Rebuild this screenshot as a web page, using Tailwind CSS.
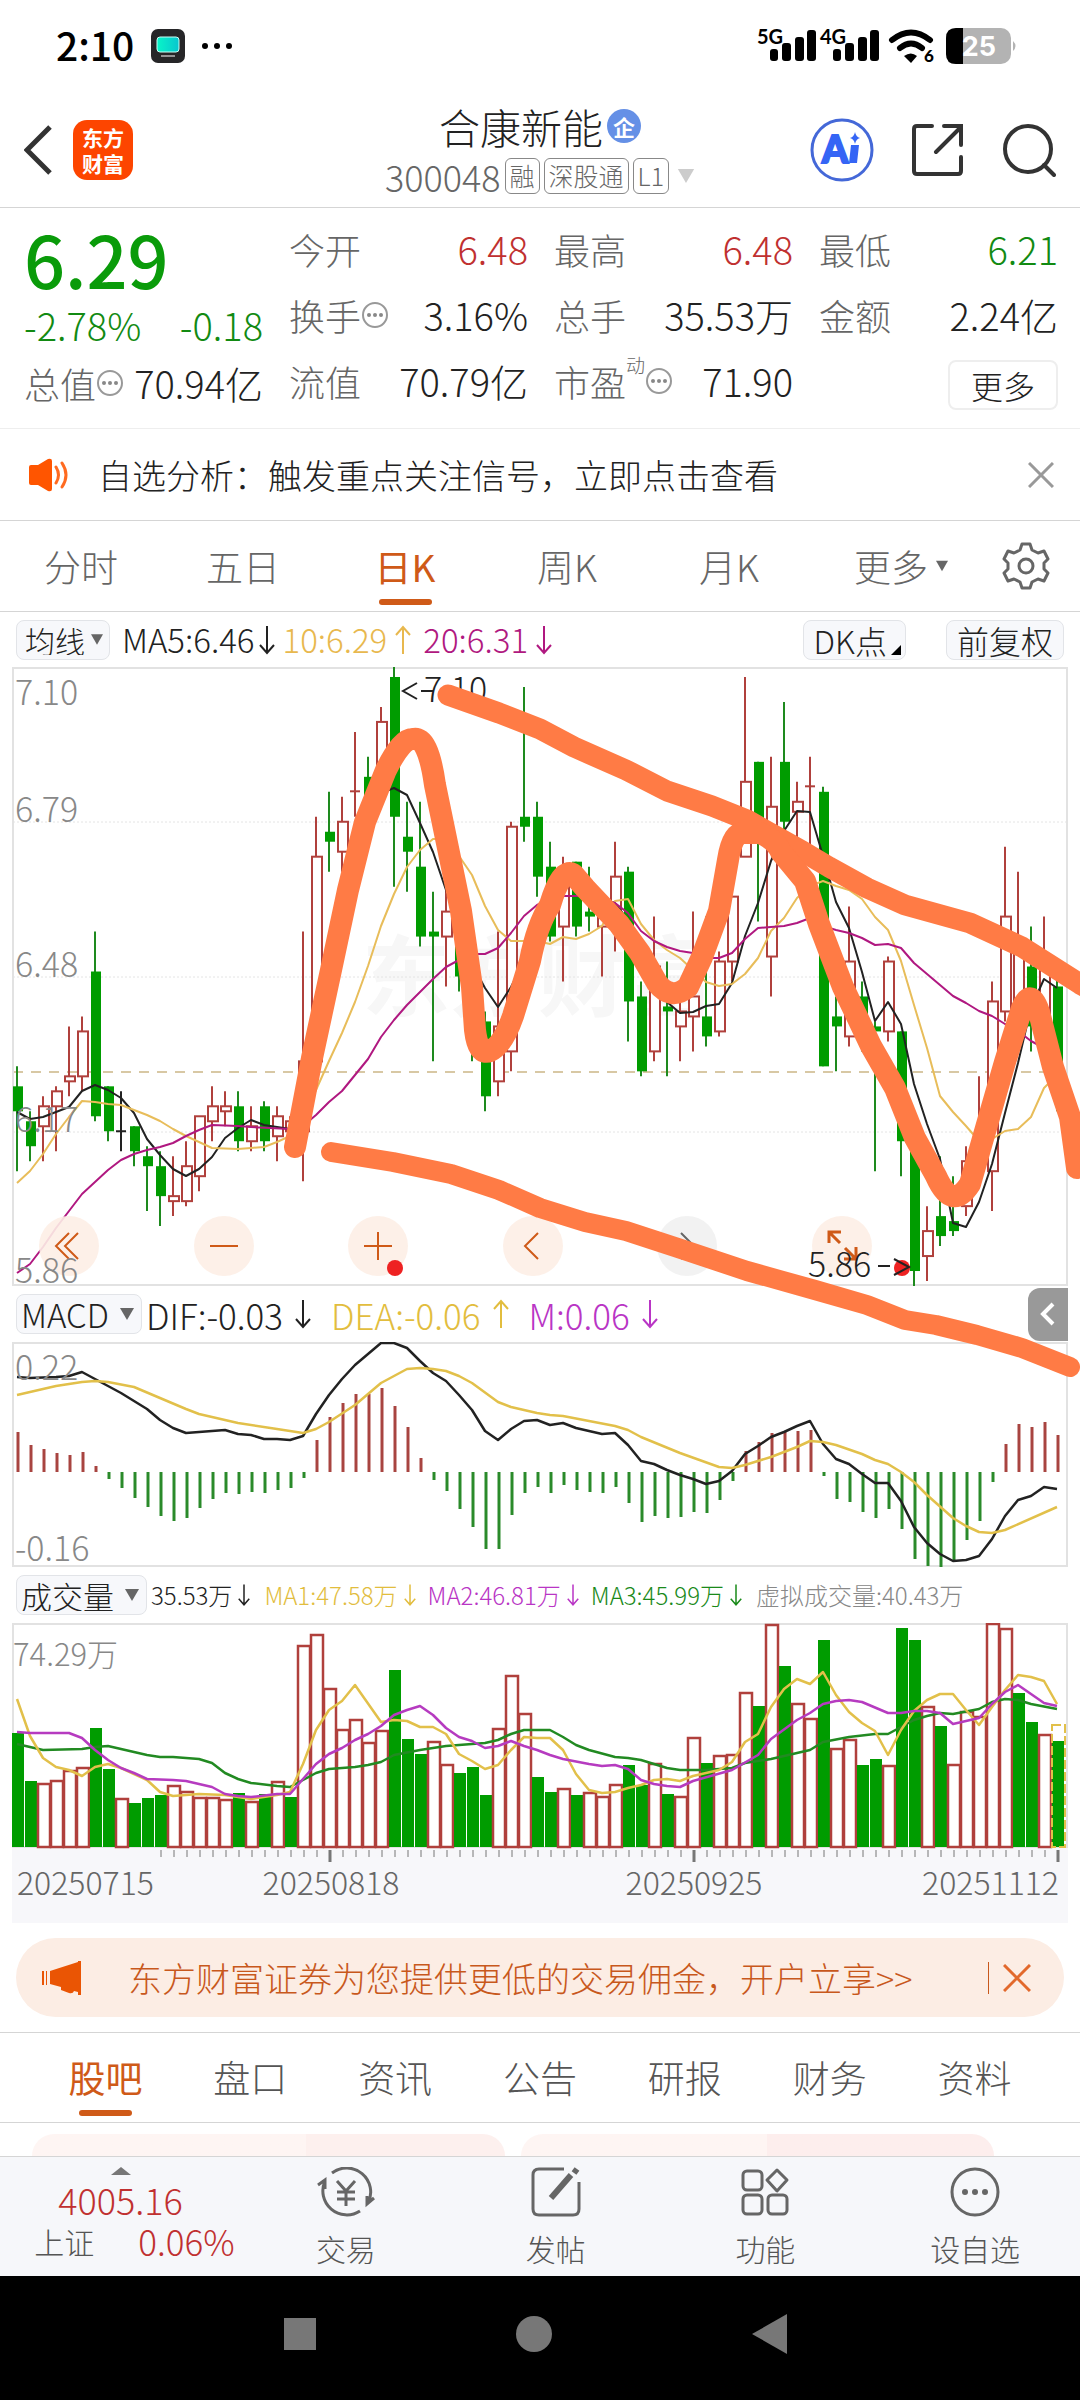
<!DOCTYPE html>
<html lang="zh-CN">
<head>
  <meta charset="UTF-8" />
  <meta name="viewport" content="width=device-width, initial-scale=1.0" />
  <title>合康新能 300048</title>
  <script src="https://cdn.jsdelivr.net/npm/@tailwindcss/browser@4"></script>
</head>
<body class="bg-white text-[#222] font-['Noto_Sans_CJK_SC',sans-serif] font-light leading-none">

  <!-- Shared symbols -->
  <svg class="hidden">
    <symbol id="down" viewBox="0 0 16 30"><path d="M8 1v27M1 20l7 8 7-8" fill="none" stroke="currentColor" stroke-width="2" /></symbol>
    <symbol id="up" viewBox="0 0 16 30"><path d="M8 29V2M1 10l7-8 7 8" fill="none" stroke="currentColor" stroke-width="2" /></symbol>
    <symbol id="caret" viewBox="0 0 14 12"><path d="M0 0h14L7 12z" fill="currentColor" /></symbol>
    <symbol id="info" viewBox="0 0 28 28">
      <circle cx="14" cy="14" r="12" fill="none" stroke="#999" stroke-width="2" />
      <g fill="#888"><circle cx="8" cy="14" r="2" /><circle cx="14" cy="14" r="2" /><circle cx="20" cy="14" r="2" /></g>
    </symbol>
  </svg>

  <!-- Status bar -->
  <div class="flex items-center justify-between h-[92px] pl-14 pr-[62px] text-black">
    <div class="flex items-center">
      <span class="text-[39px] leading-[56px] pb-1 font-medium w-[95px]">2:10</span>
      <svg class="w-[34px] h-[34px]" viewBox="0 0 34 34">
        <defs><linearGradient id="tv"><stop stop-color="#08f5c8" /><stop offset="1" stop-color="#08c6cf" /></linearGradient></defs>
        <rect width="34" height="34" rx="7" fill="#262628" />
        <rect x="6" y="8" width="22" height="15" rx="3" fill="url(#tv)" stroke="#c9fff6" />
        <path d="M10 27h14" stroke="#fff" />
      </svg>
      <svg class="w-8 h-2 ml-4" viewBox="0 0 32 8"><circle cx="4" cy="4" r="3" /><circle cx="16" cy="4" r="3" /><circle cx="28" cy="4" r="3" /></svg>
    </div>
    <div class="flex items-center">
      <svg class="w-[122px] h-[36px] overflow-visible" viewBox="0 0 122 36">
        <g font-family="Lato, sans-serif" font-weight="700" font-size="20"><text x="0" y="16">5G</text><text x="63" y="16">4G</text></g>
        <g>
          <rect x="13" y="21" width="8" height="12" rx="3" /><rect x="25" y="15" width="9" height="18" rx="3" /><rect x="38" y="9" width="9" height="24" rx="3" /><rect x="50" y="2" width="9" height="31" rx="3" />
          <rect x="76" y="21" width="8" height="12" rx="3" /><rect x="88" y="15" width="9" height="18" rx="3" /><rect x="101" y="9" width="9" height="24" rx="3" /><rect x="113" y="2" width="9" height="31" rx="3" />
        </g>
      </svg>
      <svg class="w-[46px] h-[36px] ml-[10px] overflow-visible" viewBox="0 0 46 36">
        <path d="M3 12Q22-3 41 12M11 20Q22 11 33 20" fill="none" stroke="#000" stroke-width="6" stroke-linecap="round" />
        <path d="M15 28q7-5 13 0l-6 7z" />
        <text x="35" y="34" font-family="Lato, sans-serif" font-weight="900" font-size="17">6</text>
      </svg>
      <svg class="w-[72px] h-[36px] ml-[11px]" viewBox="0 0 72 36">
        <rect width="65" height="36" rx="10" fill="#b3b3b3" />
        <path d="M17 0H10Q0 0 0 10v16q0 10 10 10h7z" />
        <path d="M67 13q5 5 0 10z" fill="#b3b3b3" />
        <text x="33" y="28" text-anchor="middle" font-family="Inter, sans-serif" font-weight="700" font-size="27" fill="#fff">25</text>
      </svg>
    </div>
  </div>

  <!-- Stock header -->
  <header class="grid grid-cols-[1fr_auto_1fr] items-center h-[116px] px-6 border-b border-[#d5d5d5]">
    <div class="flex items-center gap-[21px]">
      <button aria-label="返回"><svg class="w-[28px] h-[50px]" viewBox="0 0 28 50"><path d="M26 2L3 25l23 23" fill="none" stroke="#333" stroke-width="5" /></svg></button>
      <div class="flex flex-col items-center justify-center size-[60px] rounded-[14px] bg-[#fd4500] text-white text-[21px] leading-[26px] font-bold"><span>东方</span><span>财富</span></div>
    </div>
    <div class="flex flex-col items-center gap-2 pb-1">
      <div class="flex items-center gap-1">
        <h1 class="text-[41px] leading-[48px]">合康新能</h1>
        <span class="flex items-center justify-center size-[34px] rounded-full bg-[#6590e6] text-white text-[22px] font-bold">企</span>
      </div>
      <div class="flex items-center gap-1 text-[#666] text-[25px]">
        <span class="text-[36px]">300048</span>
        <span class="flex items-center h-[36px] px-1 border border-[#888] rounded-md">融</span>
        <span class="flex items-center h-[36px] px-1 border border-[#888] rounded-md">深股通</span>
        <span class="flex items-center h-[36px] px-1 border border-[#888] rounded-md">L1</span>
        <svg class="w-[18px] h-[14px] ml-1 text-[#ccc]"><use href="#caret" /></svg>
      </div>
    </div>
    <div class="flex items-center justify-end">
      <button aria-label="AI"><svg class="size-16" viewBox="0 0 64 64">
        <circle cx="32" cy="32" r="30" fill="none" stroke="#4468d8" stroke-width="3" />
        <text x="12" y="45" font-family="Lato, sans-serif" font-weight="900" font-size="37" fill="#3565f5" stroke="#3565f5" stroke-width="2">A</text>
        <path d="M41 27h8l-2 18h-8zM45 14q1 5 5 6-4 1-5 6-1-5-5-6 4-1 5-6z" fill="#3565f5" />
      </svg></button>
      <button aria-label="分享" class="ml-[38px]"><svg class="w-[51px] h-[52px]" viewBox="0 0 51 52">
        <path d="M20 2H5q-3 0-3 3v42q0 3 3 3h41q3 0 3-3V33M32 2h17v19M49 3L24 28" fill="none" stroke="#333" stroke-width="4" stroke-linecap="round" />
      </svg></button>
      <button aria-label="搜索" class="ml-10"><svg class="w-[53px] h-[54px]" viewBox="0 0 53 54">
        <circle cx="25" cy="26" r="23" fill="none" stroke="#333" stroke-width="4" /><path d="M41 42l10 10" stroke="#333" stroke-width="4" stroke-linecap="round" />
      </svg></button>
    </div>
  </header>

  <!-- Quote -->
  <section class="grid grid-cols-4 gap-x-[26px] h-[221px] pl-6 pr-[22px] pt-2 border-b border-[#eee] text-[36px] leading-[66px]">
    <div>
      <div class="h-[80px] text-[72px] leading-[84px] font-medium text-[#0a9b0a]">6.29</div>
      <div class="flex justify-between items-center h-[58px] leading-[58px] text-[38px] text-[#128a12]"><span>-2.78%</span><span>-0.18</span></div>
      <div class="flex justify-between items-center h-[58px] leading-[58px] whitespace-nowrap"><span class="flex items-center text-[#666]">总值<svg class="size-7"><use href="#info" /></svg></span><span class="text-[38px]">70.94亿</span></div>
    </div>
    <dl>
      <div class="flex justify-between"><dt class="text-[#666]">今开</dt><dd class="text-[38px] text-[#c03030]">6.48</dd></div>
      <div class="flex justify-between"><dt class="flex items-center text-[#666]">换手<svg class="size-7"><use href="#info" /></svg></dt><dd class="text-[38px]">3.16%</dd></div>
      <div class="flex justify-between"><dt class="text-[#666]">流值</dt><dd class="text-[38px]">70.79亿</dd></div>
    </dl>
    <dl>
      <div class="flex justify-between"><dt class="text-[#666]">最高</dt><dd class="text-[38px] text-[#c03030]">6.48</dd></div>
      <div class="flex justify-between"><dt class="text-[#666]">总手</dt><dd class="text-[38px]">35.53万</dd></div>
      <div class="flex justify-between"><dt class="flex items-center text-[#666]">市盈<sup class="text-[19px] -top-4">动</sup><svg class="size-7"><use href="#info" /></svg></dt><dd class="text-[38px]">71.90</dd></div>
    </dl>
    <div>
      <dl>
        <div class="flex justify-between"><dt class="text-[#666]">最低</dt><dd class="text-[38px] text-[#128a12]">6.21</dd></div>
        <div class="flex justify-between"><dt class="text-[#666]">金额</dt><dd class="text-[38px]">2.24亿</dd></div>
      </dl>
      <div class="flex justify-end pt-3"><button class="w-[110px] h-[50px] border-2 border-[#eee] rounded-lg text-[32px] leading-none">更多</button></div>
    </div>
  </section>

  <!-- Notice -->
  <div class="flex items-center h-[92px] pl-7 pr-[26px] border-b border-[#d5d5d5]">
    <svg class="w-[42px] h-[34px]" viewBox="0 0 42 34">
      <path d="M1 9q0-2 2-2h7L20 1q4-1 4 2v28q0 3-4 2l-10-6H3q-2 0-2-2z" fill="#ff5500" />
      <path d="M28 9q5 8 0 16M34 5q8 12 0 24" fill="none" stroke="#ff6a20" stroke-width="3" stroke-linecap="round" />
    </svg>
    <a href="#" class="ml-7 grow text-[34px] leading-[48px]">自选分析：触发重点关注信号，立即点击查看</a>
    <button aria-label="关闭"><svg class="size-[26px]" viewBox="0 0 26 26"><path d="M1 1l24 24M25 1L1 25" stroke="#999" stroke-width="3" /></svg></button>
  </div>

  <!-- Period tabs -->
  <nav class="flex items-stretch h-[91px] border-b border-[#d5d5d5] text-[37px] text-[#666]">
    <div class="grid grid-cols-6 grow">
      <button>分时</button>
      <button>五日</button>
      <button class="relative text-[#cf5a18] font-normal">日K<span class="absolute bottom-[6px] inset-x-0 mx-auto w-[53px] h-[6px] rounded-full bg-[#cf5a18]"></span></button>
      <button>周K</button>
      <button>月K</button>
      <button class="flex items-center justify-center gap-2 pl-5">更多<svg class="w-3 h-3"><use href="#caret" /></svg></button>
    </div>
    <button aria-label="设置" class="flex items-center justify-center w-[108px]"><svg class="size-12" viewBox="0 0 48 48" fill="none" stroke="#666" stroke-width="3">
      <path d="M20 2h8l2 6 6 3 6-2 4 8-4 4v6l4 4-4 8-6-2-6 3-2 6h-8l-2-6-6-3-6 2-4-8 4-4v-6l-4-4 4-8 6 2 6-3z" stroke-linejoin="round" /><circle cx="24" cy="24" r="7" />
    </svg></button>
  </nav>

  <main class="relative">
    <!-- Moving averages -->
    <div class="flex items-center h-[55px] px-4 text-[33px]">
      <label class="relative flex items-center h-10 bg-[#f7f8fb] border border-[#e2e4e8] rounded-lg">
        <span class="sr-only">主图指标</span>
        <select class="appearance-none h-full pl-2 pr-6 leading-none text-[30px]"><option>均线</option></select>
        <svg class="absolute right-[6px] w-3 h-[11px] text-[#666] pointer-events-none"><use href="#caret" /></svg>
      </label>
      <span class="ml-3">MA5:6.46</span><svg class="w-4 h-[30px] ml-1"><use href="#down" /></svg>
      <span class="flex items-center ml-2 text-[#e8b84e]">10:6.29<svg class="w-4 h-[30px] ml-2"><use href="#up" /></svg></span>
      <span class="flex items-center ml-3 text-[#b01880]">20:6.31<svg class="w-4 h-[30px] ml-2"><use href="#down" /></svg></span>
      <button class="flex items-end gap-1 ml-auto h-10 pl-[10px] pr-1 bg-[#f7f8fb] border border-[#e2e4e8] rounded-lg text-[32px] leading-[38px]">DK点<svg class="w-[10px] h-[10px] mb-1" viewBox="0 0 10 10"><path d="M10 0v10H0z" /></svg></button>
      <button class="ml-10 h-10 px-[10px] bg-[#f7f8fb] border border-[#e2e4e8] rounded-lg text-[32px] leading-[38px]">前复权</button>
    </div>

    <!-- Candles -->
    <div class="relative mx-3">
      <svg id="kline" class="block w-full" viewBox="0 0 1056 619">
        <text x="350" y="342" font-size="88" font-weight="700" fill="#f7f7f7">东方财富</text>
        <path d="M1 155h1054M1 310h1054M1 465h1054" stroke="#e4e4e4" stroke-dasharray="2 2" />
        <path d="M1 405h1054" stroke="#d8c8a4" stroke-width="2" stroke-dasharray="10 8" />
        <rect x="1" y="1" width="1054" height="617" fill="none" stroke="#e2e2e2" stroke-width="2" />
      </svg>
      <div class="absolute left-[27px] right-[196px] bottom-[10px] flex justify-between">
        <button aria-label="最早" class="size-[60px] rounded-full bg-[#fdeee5]/90"><svg viewBox="0 0 60 60" fill="none" stroke="#cf5a18" stroke-width="2"><path d="M30 17L17 30l13 13M39 17L26 30l13 13" /></svg></button>
        <button aria-label="缩小" class="size-[60px] rounded-full bg-[#fdeee5]/90"><svg viewBox="0 0 60 60" stroke="#cf5a18" stroke-width="2"><path d="M16 30h28" /></svg></button>
        <button aria-label="放大" class="size-[60px] rounded-full bg-[#fdeee5]/90"><svg class="overflow-visible" viewBox="0 0 60 60" stroke="#cf5a18" stroke-width="2"><path d="M16 30h28M30 16v28" /><circle cx="47" cy="52" r="8" fill="#ee2222" stroke="none" /></svg></button>
        <button aria-label="向左" class="size-[60px] rounded-full bg-[#fdeee5]/90"><svg viewBox="0 0 60 60" fill="none" stroke="#cf5a18" stroke-width="2"><path d="M35 17L22 30l13 13" /></svg></button>
        <button aria-label="向右" class="size-[60px] rounded-full bg-[#f1f1f1]/90"><svg viewBox="0 0 60 60" fill="none" stroke="#666" stroke-width="2"><path d="M24 17l13 13-13 13" /></svg></button>
        <button aria-label="全屏" class="size-[60px] rounded-full bg-[#fdeee5]/90"><svg viewBox="0 0 60 60" fill="none" stroke="#cf5a18" stroke-width="3"><path d="M17 27V16h12M17 16l11 11M44 31v12H32M44 43L33 32" /></svg></button>
      </div>
      <svg class="absolute inset-0 w-full pointer-events-none" viewBox="0 0 1056 619">
        <circle cx="890" cy="601" r="8" fill="#ee2222" />
        <g font-size="34" fill="#888">
          <text x="3" y="38">7.10</text><text x="3" y="155">6.79</text><text x="3" y="310">6.48</text><text x="3" y="465">6.17</text><text x="3" y="616">5.86</text>
        </g>
        <g font-size="34" fill="#222"><text x="412" y="35">7.10</text><text x="796" y="610">5.86</text></g>
        <path d="M405 16l-14 8 14 8M409 24h12M866 599h12M882 592l15 8-15 8" fill="none" stroke="#222" stroke-width="2" />
      </svg>
    </div>

    <!-- MACD -->
    <div class="flex items-center h-[56px] pl-4 pr-3 text-[35px]">
      <label class="relative flex items-center h-10 bg-[#f7f8fb] border border-[#e2e4e8] rounded-lg">
        <span class="sr-only">副图指标一</span>
        <select class="appearance-none h-full pl-1 pr-8 leading-none text-[33px]"><option>MACD</option></select>
        <svg class="absolute right-[7px] w-[14px] h-3 text-[#666] pointer-events-none"><use href="#caret" /></svg>
      </label>
      <span class="flex items-center ml-1">DIF:-0.03<svg class="w-4 h-[30px] ml-3"><use href="#down" /></svg></span>
      <span class="flex items-center ml-5 text-[#e2bd3e]">DEA:-0.06<svg class="w-4 h-[30px] ml-3"><use href="#up" /></svg></span>
      <span class="flex items-center ml-5 text-[#b935c5]">M:0.06<svg class="w-4 h-[30px] ml-3"><use href="#down" /></svg></span>
      <button aria-label="展开" class="flex items-center justify-center ml-auto w-10 h-[53px] rounded-l-xl bg-[#999]"><svg class="w-4 h-6" viewBox="0 0 16 24"><path d="M13 2L3 12l10 10" fill="none" stroke="#fff" stroke-width="4" /></svg></button>
    </div>
    <div class="mx-3"><svg id="macd" class="block w-full" viewBox="0 0 1056 225">
      <rect x="1" y="1" width="1054" height="223" fill="none" stroke="#e2e2e2" stroke-width="2" />
    </svg></div>

    <!-- Volume -->
    <div class="flex items-center h-[56px] pl-4 pr-3 text-[24px] whitespace-nowrap">
      <label class="relative flex items-center h-10 bg-[#f7f8fb] border border-[#e2e4e8] rounded-lg">
        <span class="sr-only">副图指标二</span>
        <select class="appearance-none h-full pl-1 pr-8 leading-none text-[31px]"><option>成交量</option></select>
        <svg class="absolute right-[7px] w-[14px] h-3 text-[#666] pointer-events-none"><use href="#caret" /></svg>
      </label>
      <span class="flex items-center ml-1">35.53万<svg class="w-3 h-[30px] ml-[6px]"><use href="#down" /></svg></span>
      <span class="flex items-center ml-[14px] text-[#e2bd3e]">MA1:47.58万<svg class="w-3 h-[30px] ml-[6px]"><use href="#down" /></svg></span>
      <span class="flex items-center ml-3 text-[#b935c5]">MA2:46.81万<svg class="w-3 h-[30px] ml-[6px]"><use href="#down" /></svg></span>
      <span class="flex items-center ml-3 text-[#1a8a1a]">MA3:45.99万<svg class="w-3 h-[30px] ml-[6px]"><use href="#down" /></svg></span>
      <span class="ml-[14px] text-[#888]">虚拟成交量:40.43万</span>
    </div>
    <div class="mx-3"><svg id="volume" class="block w-full" viewBox="0 0 1056 300">
      <rect y="225" width="1056" height="75" fill="#f7f7fa" />
      <rect x="1" y="1" width="1054" height="223" fill="none" stroke="#e2e2e2" stroke-width="2" />
    </svg></div>

    <!-- Hand-drawn trend lines -->
    <svg class="absolute inset-x-0 top-0 w-full pointer-events-none" viewBox="0 612 1080 780" fill="none" stroke="#ff7b45" stroke-linecap="round" stroke-linejoin="round">
      <path stroke-width="21" d="M448 695L499 713L540 729L574 747L626 770L667 791L712 806L747 820L802 851L829 867L867 888L905 905L970 923L1022 947L1080 984L1096 993" />
      <path stroke-width="22" d="M295 1147L312 1058L331 970L348 890L365 822L386 770Q402 738 413 739Q428 735 435 785L448 848L461 911L472 987L475 1030Q478 1056 490 1051Q503 1045 513 1016L530 961Q537 925 550 905Q561 868 573 874L585 888L619 924L640 953L657 983Q671 1001 688 987L702 957L719 911L728 860Q732 834 742 833L760 833Q776 840 781 852L805 881L819 924L843 987L871 1046L895 1088L915 1138L936 1176Q952 1212 970 1184L988 1121L1005 1062L1022 1008Q1031 987 1039 1012L1053 1067L1070 1117L1077 1168" />
      <path stroke-width="20" d="M331 1152L393 1162L451 1174L499 1190L540 1208L585 1222L626 1231L678 1248L747 1271L815 1290L867 1305L905 1320L936 1325L977 1335L1022 1348L1070 1367" />
    </svg>
  </main>

  <!-- Promo -->
  <div class="flex items-center h-[79px] mx-4 mt-[15px] mb-[15px] pl-6 pr-[33px] rounded-full bg-[#fcede4] text-[#c8581c]">
    <svg class="w-[42px] h-[34px]" viewBox="0 0 42 34" fill="#ea5504"><path d="M2 10h2v14H2zM6 10h1v14H6zM10 10L38 1V0h3v34h-3v-3l-4-1q-1 3-5 2l-8-3v-3l-11-3z" /></svg>
    <a href="#" class="ml-[46px] grow text-[34px] leading-[48px]">东方财富证券为您提供更低的交易佣金，开户立享&gt;&gt;</a>
    <span class="w-px h-8 bg-[#c8581c]"></span>
    <button aria-label="关闭" class="ml-[14px]"><svg class="size-7" viewBox="0 0 28 28"><path d="M1 1l26 26M27 1L1 27" stroke="#e2692c" stroke-width="3" /></svg></button>
  </div>

  <!-- Section tabs -->
  <nav class="grid grid-cols-7 h-[91px] px-[33px] border-y border-[#d5d5d5] text-[37px] text-[#555]">
    <button class="relative text-[#cf5a18] font-normal">股吧<span class="absolute bottom-[6px] inset-x-0 mx-auto w-[53px] h-[6px] rounded-full bg-[#cf5a18]"></span></button>
    <button>盘口</button>
    <button>资讯</button>
    <button>公告</button>
    <button>研报</button>
    <button>财务</button>
    <button>资料</button>
  </nav>
  <div class="flex gap-4 h-[33px] pt-[11px] pl-8 pr-[86px]">
    <div class="grow rounded-t-3xl bg-linear-to-r from-[#fef5f3] from-58% to-[#fdf0ee] to-58%"></div>
    <div class="grow rounded-t-3xl bg-linear-to-r from-[#fef5f3] from-52% to-[#fdeeed] to-52%"></div>
  </div>

  <!-- Bottom bar -->
  <footer class="flex h-[120px] border-t border-[#d5d5d5] bg-[#f6f7fa] text-[30px] text-[#555]">
    <a href="#" class="flex flex-col items-center w-[241px]">
      <svg class="w-5 h-2 mt-[10px]" viewBox="0 0 20 8"><path d="M0 8L10 0l10 8z" fill="#777" /></svg>
      <span class="mt-1 text-[36px] leading-10 text-[#c03030]">4005.16</span>
      <span class="flex gap-11 mt-[2px] pl-7 leading-10">上证<span class="text-[35px] text-[#c03030]">0.06%</span></span>
    </a>
    <div class="grid grid-cols-4 grow">
      <a href="#" class="flex flex-col items-center gap-4 pt-[10px]">
        <svg class="w-[58px] h-[50px]" viewBox="0 0 58 50" fill="none" stroke="#666" stroke-width="3"><path d="M15 6A24 24 0 0 1 51 36M43 44A24 24 0 0 1 8 14M1 18l7-5v9M57 31l-7 6v-8M20 14l9 10 9-10M29 24v15M20 25h18M20 32h18" /></svg>
        交易</a>
      <a href="#" class="flex flex-col items-center gap-4 pt-[10px]">
        <svg class="size-[50px]" viewBox="0 0 50 50" fill="none" stroke="#666" stroke-width="3"><path d="M33 2H8Q2 2 2 8v34q0 6 6 6h34q6 0 6-6V15" /><path d="M20 31L40 8" stroke-width="6" /><path d="M43 6l3-4" stroke-width="6" /></svg>
        发帖</a>
      <a href="#" class="flex flex-col items-center gap-4 pt-[10px]">
        <svg class="size-[50px]" viewBox="0 0 50 50" fill="none" stroke="#666" stroke-width="3"><rect x="3" y="4" width="19" height="19" rx="4" /><rect x="3" y="28" width="19" height="19" rx="4" /><rect x="28" y="28" width="19" height="19" rx="4" /><path d="M37 3l10 10-10 11-10-11z" stroke-linejoin="round" /></svg>
        功能</a>
      <a href="#" class="flex flex-col items-center gap-4 pt-[10px]">
        <svg class="size-[50px]" viewBox="0 0 50 50"><circle cx="25" cy="25" r="23" fill="none" stroke="#666" stroke-width="3" /><g fill="#666"><circle cx="15" cy="25" r="3" /><circle cx="25" cy="25" r="3" /><circle cx="35" cy="25" r="3" /></g></svg>
        设自选</a>
    </div>
  </footer>

  <!-- System navigation -->
  <div class="flex items-center justify-center gap-[200px] h-[124px] pr-1 pb-2 bg-black">
    <button aria-label="最近任务" class="size-8 bg-[#777]"></button>
    <button aria-label="主屏幕" class="size-9 rounded-full bg-[#777]"></button>
    <button aria-label="返回" class="size-[40px]"><svg viewBox="0 0 40 40"><path d="M35 0v40L0 20z" fill="#777" /></svg></button>
  </div>

  <script>
    const NS = 'http://www.w3.org/2000/svg';
    const RED = '#b0403c', GREEN = '#009c00';
    const STEP = 13, X0 = 5;

    // open, high, low, close
    const candles = [
      [6.26,6.30,6.09,6.21],[6.19,6.21,6.11,6.14],[6.18,6.24,6.11,6.22],[6.22,6.26,6.13,6.25],[6.27,6.38,6.24,6.28],
      [6.28,6.40,6.25,6.37],[6.49,6.57,6.19,6.20],[6.26,6.26,6.15,6.17],[6.17,6.25,6.13,6.17],[6.18,6.18,6.10,6.13],
      [6.12,6.14,6.01,6.10],[6.10,6.13,5.98,6.04],[6.03,6.12,6.00,6.04],[6.03,6.15,6.02,6.10],[6.08,6.20,6.05,6.20],
      [6.19,6.26,6.15,6.22],[6.21,6.25,6.18,6.22],[6.22,6.25,6.13,6.15],[6.15,6.22,6.13,6.18],[6.22,6.23,6.13,6.15],
      [6.16,6.22,6.11,6.20],[6.17,6.20,6.17,6.19],[6.17,6.57,6.07,6.31],[6.31,6.80,6.30,6.72],[6.77,6.85,6.69,6.75],
      [6.73,6.84,6.69,6.79],[6.85,6.97,6.80,6.851],[6.88,6.92,6.80,6.84],[6.85,7.02,6.83,6.99],[7.08,7.10,6.66,6.80],
      [6.76,6.83,6.65,6.73],[6.70,6.83,6.54,6.56],[6.57,6.65,6.31,6.56],[6.56,6.68,6.46,6.61],[6.60,6.62,6.45,6.48],
      [6.46,6.48,6.31,6.38],[6.39,6.41,6.21,6.24],[6.27,6.57,6.24,6.38],[6.33,6.79,6.29,6.78],[6.80,7.06,6.75,6.78],
      [6.80,6.83,6.64,6.68],[6.70,6.75,6.55,6.56],[6.58,6.72,6.47,6.66],[6.71,6.71,6.56,6.58],[6.61,6.70,6.57,6.60],
      [6.58,6.64,6.48,6.62],[6.59,6.75,6.53,6.68],[6.69,6.70,6.35,6.43],[6.44,6.47,6.28,6.29],[6.33,6.60,6.31,6.50],
      [6.42,6.51,6.28,6.41],[6.38,6.43,6.31,6.41],[6.40,6.61,6.33,6.44],[6.40,6.60,6.34,6.36],[6.37,6.53,6.36,6.51],
      [6.51,6.64,6.47,6.64],[6.72,7.08,6.72,6.87],[6.91,6.91,6.59,6.78],[6.52,6.92,6.44,6.82],[6.91,7.03,6.76,6.79],
      [6.81,6.87,6.70,6.83],[6.86,6.92,6.72,6.861],[6.85,6.86,6.30,6.30],[6.40,6.44,6.29,6.38],[6.36,6.62,6.34,6.51],
      [6.44,6.47,6.33,6.38],[6.38,6.39,6.09,6.37],[6.37,6.52,6.35,6.51],[6.37,6.37,6.08,6.15],[6.13,6.13,5.86,5.89],
      [5.92,6.02,5.87,5.97],[6.00,6.12,5.94,5.96],[5.99,6.08,5.96,5.97],[6.02,6.14,6.00,6.11],[6.10,6.28,6.08,6.14],
      [6.09,6.47,6.01,6.43],[6.41,6.74,6.39,6.60],[6.43,6.69,6.42,6.55],[6.50,6.58,6.33,6.38],[6.38,6.60,6.36,6.51],
      [6.46,6.48,6.21,6.29]
    ];
    const macdBars = [40,27,23,19,17,20,6,-7,-16,-26,-35,-44,-49,-46,-36,-27,-21,-22,-20,-21,-18,-16,-6,32,55,69,78,78,84,66,45,14,-8,-19,-37,-55,-77,-77,-43,-21,-15,-21,-13,-18,-20,-21,-15,-31,-50,-44,-46,-45,-40,-41,-28,-9,21,30,39,40,41,42,-4,-27,-30,-40,-46,-37,-57,-87,-94,-95,-89,-68,-49,-10,28,48,45,50,37];
    // negative: closed lower that day
    const volumes = [-114,-66,63,66,76,79,-119,-78,48,-44,-49,-52,61,55,49,49,47,-54,45,-53,65,-50,201,212,158,117,127,104,116,-177,-108,-93,105,82,-74,-80,-52,118,171,133,-70,-55,58,-52,54,50,62,-82,-62,83,-53,50,109,-84,91,92,154,-141,222,-181,143,128,-207,98,107,-82,-88,81,-219,-207,140,-121,82,135,130,223,218,-154,-125,112,-106];

    // "index,y" pairs
    const lines = {
      ma5: '0,445 1,452 2,450 3,445 4,440 5,424 6,418 7,423 8,431 9,446 10,472 11,488 12,502 13,509 14,502 15,490 16,471 17,461 18,453 19,458 20,460 21,462 22,446 23,387 24,328 25,269 26,194 27,143 28,126 29,121 30,128 31,156 32,185 33,223 34,261 35,297 36,321 37,340 38,320 39,295 40,261 41,236 42,219 43,219 44,232 45,232 46,236 47,253 48,278 49,307 50,335 51,346 52,345 53,339 54,337 55,316 56,269 57,236 58,194 59,164 60,144 61,145 62,189 63,235 64,261 65,305 66,354 67,335 68,357 69,417 70,457 71,492 72,556 73,560 74,535 75,497 76,446 77,396 78,341 79,312 80,321',
      ma10: '0,516 1,504 2,487 3,467 4,450 5,434 6,435 7,437 8,438 9,443 10,448 11,454 12,462 13,469 14,475 15,481 17,482 18,481 19,480 20,475 21,469 22,450 23,423 24,394 25,366 26,335 27,299 28,259 29,227 30,200 31,183 32,172 33,172 34,189 35,208 36,239 37,263 38,274 40,274 41,277 42,270 43,272 44,267 45,259 46,234 47,232 48,257 49,273 50,283 51,291 52,303 53,315 54,319 55,317 56,307 57,291 58,264 59,251 60,231 61,219 62,214 63,219 64,223 65,232 66,250 67,263 68,294 69,338 70,381 71,429 72,445 73,459 74,474 75,472 76,464 77,462 78,450 79,421 80,408',
      ma20: '0,606 1,597 2,580 3,561 4,544 5,527 6,515 7,503 8,493 9,487 10,483 11,480 12,476 13,469 14,463 15,458 17,459 18,460 21,462 22,459 23,448 24,435 25,424 26,408 27,392 28,370 29,353 30,338 31,325 32,312 33,300 34,293 35,287 36,287 37,281 38,266 39,249 40,238 41,232 42,229 44,229 45,232 46,236 47,246 48,264 49,274 50,280 51,284 52,286 53,291 54,291 55,286 56,272 57,261 58,260 59,259 60,256 61,251 62,259 63,263 64,266 65,271 66,278 67,277 68,281 69,296 70,307 71,318 72,329 73,336 74,344 75,349 76,357 77,364 78,374 79,381 80,383',
      dif: '0,35 1,36 3,35 4,34 5,30 6,37 7,44 8,51 9,59 10,67 11,78 12,86 13,91 16,88 17,92 18,93 19,97 20,97 21,98 22,94 23,72 24,53 25,37 26,23 27,12 28,1 29,1 30,6 31,19 32,31 33,39 34,53 35,68 36,89 37,98 38,87 39,79 40,78 41,83 42,81 43,86 44,89 45,92 46,91 47,103 48,119 49,122 50,128 51,133 52,137 53,142 54,139 55,129 56,112 57,104 58,95 59,90 60,84 61,79 62,102 63,117 64,122 65,132 66,141 67,141 68,159 69,185 70,201 71,212 72,219 73,218 74,214 75,197 76,174 77,158 78,154 79,145 80,147',
      dea: '0,53 1,50 3,44 5,40 6,39 7,40 9,45 11,56 13,67 14,72 17,81 20,87 22,91 23,87 24,80 26,63 28,41 30,27 31,26 32,27 33,29 34,34 35,41 37,60 38,65 39,68 40,71 41,73 42,74 44,79 46,84 47,88 48,95 51,111 54,125 55,126 56,123 58,115 60,105 61,99 62,100 63,103 65,112 66,118 67,122 68,130 69,140 70,153 72,176 73,184 74,190 75,191 76,188 80,165',
      vol5: '0,76 1,113 2,135 3,144 4,147 5,153 6,144 7,141 8,145 9,151 10,157 11,169 12,173 14,171 16,172 18,176 20,172 21,169 22,141 23,107 24,87 25,78 26,62 28,99 29,97 30,98 31,104 32,104 33,111 34,131 35,138 36,146 37,142 38,127 39,114 40,115 41,115 42,127 43,151 44,167 45,170 46,169 47,165 48,162 49,157 50,156 51,158 52,153 53,150 54,147 55,139 56,119 57,111 58,84 59,66 60,56 61,61 62,49 63,72 64,89 65,100 66,108 67,132 68,107 69,88 70,77 71,71 72,71 73,87 74,102 75,84 76,67 77,52 78,54 79,58 80,81',
      vol10: '0,109 1,110 4,110 5,115 6,127 7,137 8,145 9,150 10,156 12,157 13,158 15,164 16,171 17,173 18,174 20,171 21,171 22,156 23,141 24,131 25,125 26,117 27,111 28,103 29,92 30,87 31,83 32,92 33,105 34,114 35,118 36,125 37,123 38,118 39,123 40,127 41,132 42,136 44,141 45,143 46,142 47,146 48,157 49,161 50,163 51,164 52,158 55,147 57,132 58,116 60,97 61,90 62,81 63,78 64,77 65,79 67,90 68,90 69,88 70,88 71,90 72,101 73,98 74,95 75,81 76,69 77,62 79,80 80,83',
      vol20: '0,121 2,127 5,126 6,124 7,123 8,126 10,132 11,134 12,134 14,136 15,140 16,150 17,156 18,160 20,163 21,164 22,157 23,150 24,146 26,144 27,142 28,139 29,132 31,127 33,123 35,121 36,120 37,117 38,111 39,107 41,107 42,114 43,122 44,127 46,134 47,135 48,137 50,145 51,147 53,147 55,145 56,140 58,136 60,130 61,127 62,119 64,114 66,111 67,111 68,104 69,97 70,93 71,90 72,91 74,86 75,79 76,76 77,77 78,81 80,86'
    };

    function add(parent, tag, attrs, text) {
      const el = document.createElementNS(NS, tag);
      for (const k in attrs) el.setAttribute(k, attrs[k]);
      if (text) el.textContent = text;
      parent.appendChild(el);
      return el;
    }
    function cx(i) { return X0 + i * STEP; }
    function drawLine(parent, data, color, width) {
      const points = data.split(' ').map(p => {
        const [i, y] = p.split(',');
        return cx(+i) + ',' + y;
      }).join(' ');
      add(parent, 'polyline', { points, fill: 'none', stroke: color, 'stroke-width': width, 'stroke-linejoin': 'round' });
    }

    // Price chart
    const kline = document.getElementById('kline');
    const priceY = p => (7.10 - p) / 1.24 * 619;
    candles.forEach(([o, h, l, c], i) => {
      const x = cx(i);
      const color = c > o ? RED : c < o ? '#1e8a1e' : '#222';
      const top = priceY(Math.max(o, c)), bottom = priceY(Math.min(o, c));
      add(kline, 'line', { x1: x, x2: x, y1: priceY(h), y2: priceY(l), stroke: color, 'stroke-width': 2 });
      if (bottom - top < 2) {
        add(kline, 'line', { x1: x - 5, x2: x + 5, y1: top, y2: top, stroke: color, 'stroke-width': 2 });
      } else if (c > o) {
        add(kline, 'rect', { x: x - 4, y: top, width: 10, height: bottom - top, fill: '#fff', stroke: RED, 'stroke-width': 2 });
      } else {
        add(kline, 'rect', { x: x - 4, y: top, width: 10, height: bottom - top, fill: GREEN });
      }
    });
    drawLine(kline, lines.ma5, '#222', 2);
    drawLine(kline, lines.ma10, '#e8bd5a', 2);
    drawLine(kline, lines.ma20, '#b01880', 2);

    // MACD chart
    const macd = document.getElementById('macd');
    macdBars.forEach((v, i) => {
      add(macd, 'line', { x1: cx(i) + 1, x2: cx(i) + 1, y1: 130, y2: 130 - v, stroke: v > 0 ? '#a84440' : '#2a8a2a', 'stroke-width': 3 });
    });
    drawLine(macd, lines.dif, '#222', 2.5);
    drawLine(macd, lines.dea, '#e2c04a', 2.5);
    add(macd, 'text', { x: 3, y: 38, 'font-size': 34, fill: '#888' }, '0.22');
    add(macd, 'text', { x: 3, y: 219, 'font-size': 34, fill: '#888' }, '-0.16');

    // Volume chart
    const volume = document.getElementById('volume');
    volumes.forEach((v, i) => {
      const x = i * STEP;
      if (v > 0) add(volume, 'rect', { x: x, y: 224 - v, width: 12, height: v, fill: '#fff', stroke: RED, 'stroke-width': 2.5 });
      else add(volume, 'rect', { x: x, y: 224 + v, width: 12, height: -v, fill: GREEN });
    });
    add(volume, 'rect', { x: 1040, y: 102, width: 13, height: 122, fill: 'none', stroke: '#e2c04a', 'stroke-width': 2, 'stroke-dasharray': '9 3' });
    drawLine(volume, lines.vol20, '#228a22', 2.5);
    drawLine(volume, lines.vol5, '#e2c04a', 2.5);
    drawLine(volume, lines.vol10, '#b63bc0', 2.5);
    add(volume, 'text', { x: 1, y: 43, 'font-size': 31, fill: '#888' }, '74.29万');

    // Date axis
    for (let i = 11; i < candles.length; i++) {
      const major = i === 24 || i === 52 || i === 80;
      add(volume, 'line', { x1: cx(i) + 1, x2: cx(i) + 1, y1: 227, y2: major ? 239 : 234, stroke: '#777', 'stroke-width': major ? 3 : 1 });
    }
    [['20250715', 5, 'start'], ['20250818', 319, 'middle'], ['20250925', 682, 'middle'], ['20251112', 1047, 'end']].forEach(([d, x, anchor]) => {
      add(volume, 'text', { x, y: 272, 'font-size': 32, fill: '#666', 'text-anchor': anchor }, d);
    });
  </script>
</body>
</html>
